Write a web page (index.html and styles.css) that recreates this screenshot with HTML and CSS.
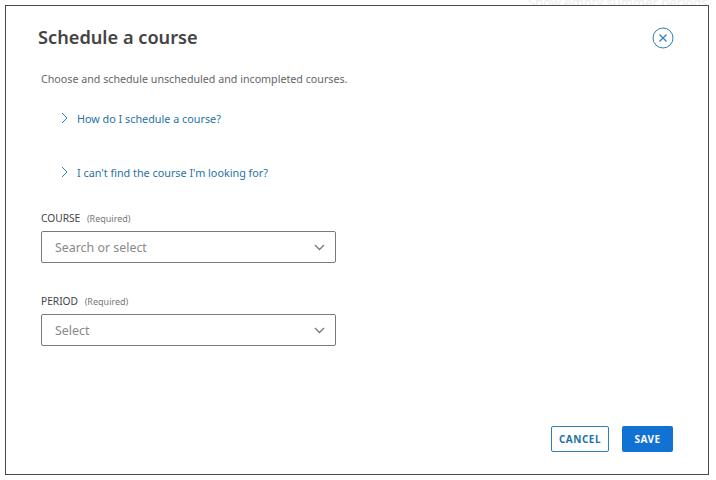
FILE: index.html
```html
<!DOCTYPE html>
<html lang="en">
<head>
	<meta charset="UTF-8">
	<title>Schedule a course</title>
	<link rel="stylesheet" href="styles.css">
</head>
<body>
	<div class="backdrop"><span>Show empty summer periods</span></div>
	<main class="modal">
		<header class="modal-head">
			<h1>Schedule a course</h1>
			<button class="close" aria-label="Close">
				<svg width="22" height="22" viewBox="0 0 22 22" fill="none" stroke="#2f7fb5">
					<circle cx="11" cy="11" r="10"/>
					<path d="M7.5 7.5l7 7M14.5 7.5l-7 7" stroke-width="1.2"/>
				</svg>
			</button>
		</header>
		<p class="intro">Choose and schedule unscheduled and incompleted courses.</p>
		<ul class="help">
			<li>
				<svg width="7" height="12" viewBox="0 0 7 12" fill="none" stroke="#2f7fb5"><path d="M1 1l5 5-5 5"/></svg>
				<a href="#">How do I schedule a course?</a>
			</li>
			<li>
				<svg width="7" height="12" viewBox="0 0 7 12" fill="none" stroke="#2f7fb5"><path d="M1 1l5 5-5 5"/></svg>
				<a href="#">I can't find the course I'm looking for?</a>
			</li>
		</ul>
		<section class="field">
			<label>COURSE <small>(Required)</small></label>
			<div class="select">
				<span>Search or select</span>
				<svg width="11" height="7" viewBox="0 0 11 7" fill="none" stroke="#777" stroke-width="1.3"><path d="M1 1l4.5 4.5L10 1"/></svg>
			</div>
		</section>
		<section class="field">
			<label>PERIOD <small>(Required)</small></label>
			<div class="select">
				<span>Select</span>
				<svg width="11" height="7" viewBox="0 0 11 7" fill="none" stroke="#777" stroke-width="1.3"><path d="M1 1l4.5 4.5L10 1"/></svg>
			</div>
		</section>
		<footer class="actions">
			<button class="btn cancel">CANCEL</button>
			<button class="btn save">SAVE</button>
		</footer>
	</main>
</body>
</html>
```

FILE: styles.css
```css
* {
	box-sizing: border-box;
}
html, body {
	height: 100%;
}
body {
	background-color: #fff;
	color: #444;
	font-family: "Noto Sans", "Open Sans", sans-serif;
	margin: 0;
	padding: 5px 7px 5px 5px;
	overflow: hidden;
}
/* page behind the modal, only its last line shows above the top edge */
.backdrop {
	color: #e9eef2;
	font-size: 13px;
	height: 5px;
	left: 528px;
	line-height: 5px;
	overflow: hidden;
	position: absolute;
	top: 0;
	white-space: nowrap;
}
.modal {
	border: 1px solid #4a4a4a;
	display: flex;
	flex-direction: column;
	height: 470px;
	padding: 0 35px 0 35px;
	width: 704px;
}
.modal-head {
	align-items: center;
	display: flex;
	justify-content: space-between;
	padding-top: 18px;
}
.modal-head h1 {
	color: #444;
	font-size: 18.2px;
	font-weight: 600;
	line-height: 27px;
	margin: 0 0 0 -3px;
}
.close {
	background: none;
	border: none;
	display: block;
	height: 22px;
	margin-right: -1px;
	padding: 0;
	width: 22px;
}
.intro {
	color: #666;
	font-size: 10.7px;
	line-height: 16px;
	margin: 20px 0 0;
}
.help {
	list-style: none;
	margin: 23px 0 0;
	padding: 0 0 0 20px;
}
.help li {
	align-items: center;
	display: flex;
	gap: 9px;
	height: 16px;
	margin-bottom: 38px;
}
.help a {
	color: #1f72a6;
	font-size: 10.8px;
	text-decoration: none;
}
.field {
	margin-bottom: 31px;
	width: 295px;
}
.help + .field {
	margin-top: -7px;
}
.field label {
	color: #444;
	display: block;
	font-size: 10.2px;
	line-height: 14px;
	margin-bottom: 5px;
}
.field small {
	color: #777;
	font-size: 9px;
	margin-left: 4px;
}
.select {
	align-items: center;
	border: 1px solid #7a7a7a;
	border-radius: 2px;
	display: flex;
	height: 32px;
	justify-content: space-between;
	padding: 0 10px 0 13px;
}
.select span {
	color: #888;
	font-size: 12.4px;
}
.actions {
	display: flex;
	gap: 13px;
	justify-content: flex-end;
	margin-top: auto;
	padding-bottom: 22px;
}
.btn {
	border-radius: 2px;
	font-family: inherit;
	font-size: 10px;
	font-weight: 700;
	height: 26px;
	letter-spacing: 0.5px;
	padding: 0;
}
.cancel {
	background-color: #fff;
	border: 1px solid #2f7fb5;
	color: #1f72a6;
	width: 58px;
}
.save {
	background-color: #1272d3;
	border: none;
	color: #fff;
	width: 51px;
}
```
